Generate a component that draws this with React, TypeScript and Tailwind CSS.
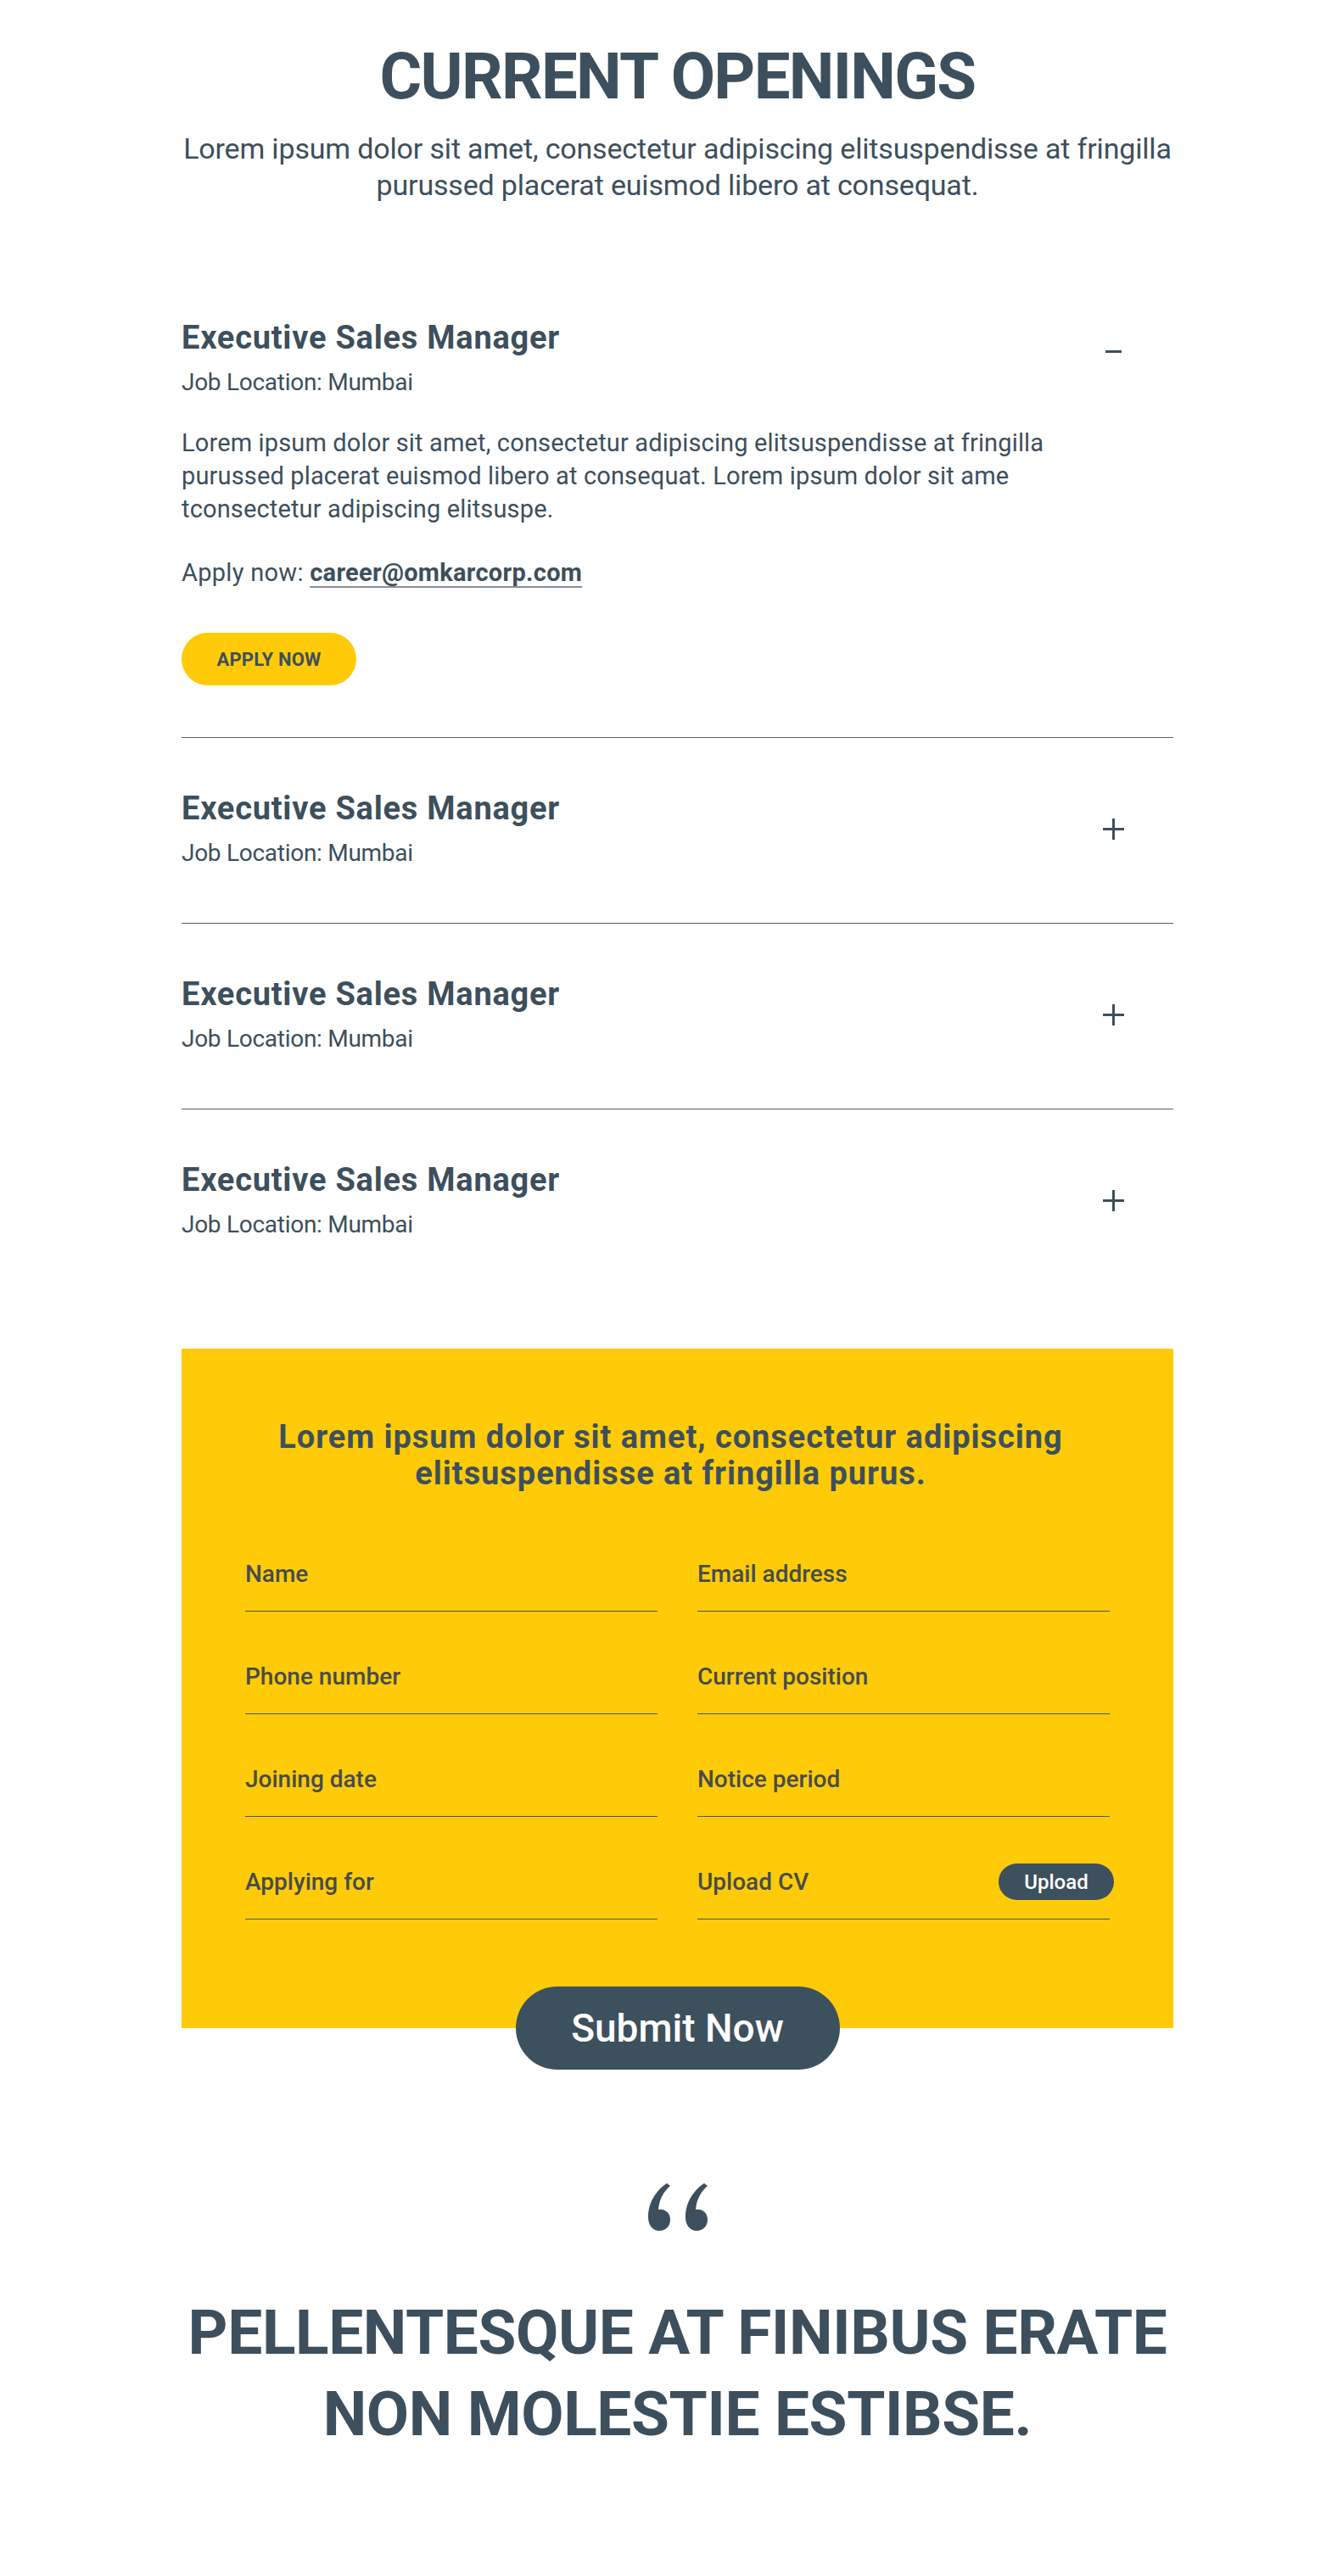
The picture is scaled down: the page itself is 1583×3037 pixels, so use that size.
import React from "react";

const jobs = [
  { title: "Executive Sales Manager", location: "Job Location: Mumbai" },
  { title: "Executive Sales Manager", location: "Job Location: Mumbai" },
  { title: "Executive Sales Manager", location: "Job Location: Mumbai" },
  { title: "Executive Sales Manager", location: "Job Location: Mumbai" },
];

const fields = [
  "Name",
  "Email address",
  "Phone number",
  "Current position",
  "Joining date",
  "Notice period",
  "Applying for",
  "Upload CV",
];

function Toggle({ open }: { open: boolean }) {
  return (
    <div className="mr-[57px] flex h-[28px] w-[28px] items-center justify-center">
      {open ? (
        <div className="mb-[16px] h-[3px] w-[19px] bg-[#3d4f5c]" />
      ) : (
        <div className="relative h-[25px] w-[25px]">
          <div className="absolute left-0 top-[11px] h-[3px] w-[25px] bg-[#3d4f5c]" />
          <div className="absolute left-[11px] top-0 h-[25px] w-[3px] bg-[#3d4f5c]" />
        </div>
      )}
    </div>
  );
}

function QuoteMark() {
  return (
    <svg width="74" height="56" viewBox="0 0 74 56" fill="#3d4f5c">
      <path d="M24 0 C12 8 2 22 2 40 C2 50 8 56 15 56 C23 56 28 50 28 43 C28 35 22 30 14 31 C15 19 20 10 28 3 Z" />
      <path d="M68 0 C56 8 46 22 46 40 C46 50 52 56 59 56 C67 56 72 50 72 43 C72 35 66 30 58 31 C59 19 64 10 72 3 Z" />
    </svg>
  );
}

export default function App() {
  return (
    <div className="min-h-[3037px] bg-white font-['Roboto',sans-serif] text-[#3d4f5c]">
      <div className="mx-auto w-[1183px] pl-[14px] pt-[52px]">
        <h1 className="text-center text-[76px] font-bold leading-none tracking-[-0.022em]">
          CURRENT OPENINGS
        </h1>
        <p className="mt-[26px] text-center text-[34px] leading-[43px] tracking-[-0.005em]">
          <span className="block">
            Lorem ipsum dolor sit amet, consectetur adipiscing elitsuspendisse at fringilla
          </span>
          <span className="block">purussed placerat euismod libero at consequat.</span>
        </p>

        <div className="mt-[75px]">
          {jobs.map((job, i) => {
            const open = i === 0;
            const last = i === jobs.length - 1;
            return (
              <div
                key={i}
                className={`pt-[61px] ${open ? "pb-[61px]" : "pb-[64px]"} ${
                  last ? "" : "border-b border-[#596168]"
                }`}
              >
                <div className="flex items-center">
                  <div className="flex-1">
                    <h3 className="text-[38px] font-bold leading-[44px] tracking-[0.02em]">
                      {job.title}
                    </h3>
                    <p className="mt-[13px] text-[28px] leading-[36px] tracking-[-0.01em]">
                      {job.location}
                    </p>
                  </div>
                  <Toggle open={open} />
                </div>
                {open && (
                  <div>
                    <p className="mt-[34px] text-[29px] leading-[39px] tracking-[0.005em]">
                      <span className="block">
                        Lorem ipsum dolor sit amet, consectetur adipiscing elitsuspendisse at fringilla
                      </span>
                      <span className="block">
                        purussed placerat euismod libero at consequat. Lorem ipsum dolor sit ame
                      </span>
                      <span className="block">tconsectetur adipiscing elitsuspe.</span>
                    </p>
                    <p className="mt-[36px] text-[29px] leading-[39px] tracking-[0.01em]">
                      Apply now:{" "}
                      <a className="font-bold underline decoration-[#8a9096] decoration-2 underline-offset-[6px]">
                        career@omkarcorp.com
                      </a>
                    </p>
                    <button className="mt-[51px] h-[62px] w-[206px] rounded-full bg-[#ffcb08] text-[22px] font-bold tracking-[0.01em] text-[#3d4f5c]">
                      APPLY NOW
                    </button>
                  </div>
                )}
              </div>
            );
          })}
        </div>

        <div className="mt-[64px] bg-[#ffcb08] px-[75px] pb-[128px] pt-[83px]">
          <h2 className="pr-[16px] text-center text-[38px] font-bold leading-[43px] tracking-[0.025em]">
            <span className="block">Lorem ipsum dolor sit amet, consectetur adipiscing</span>
            <span className="block">elitsuspendisse at fringilla purus.</span>
          </h2>
          <div className="mt-[79px] grid grid-cols-2 gap-x-[47px] gap-y-[59px]">
            {fields.map((f) => (
              <div
                key={f}
                className="relative border-b border-[#4d5459] pb-[25px] text-[28px] font-medium leading-[36px] text-[#464c4a]"
              >
                {f}
                {f === "Upload CV" && (
                  <button className="absolute right-[-5px] top-[-4px] h-[43px] w-[136px] rounded-full bg-[#3d505e] text-[24px] font-medium text-white">
                    Upload
                  </button>
                )}
              </div>
            ))}
          </div>
        </div>
        <div className="relative -mt-[49px] flex justify-center">
          <button className="h-[98px] w-[382px] rounded-full bg-[#3d505e] text-[46px] font-medium text-white">
            Submit Now
          </button>
        </div>

        <div className="mt-[134px] flex justify-center">
          <QuoteMark />
        </div>
        <h2 className="mt-[72px] text-center text-[73px] font-bold leading-[96px] tracking-[-0.005em]">
          <span className="block">PELLENTESQUE AT FINIBUS ERATE</span>
          <span className="block">NON MOLESTIE ESTIBSE.</span>
        </h2>
      </div>
    </div>
  );
}
